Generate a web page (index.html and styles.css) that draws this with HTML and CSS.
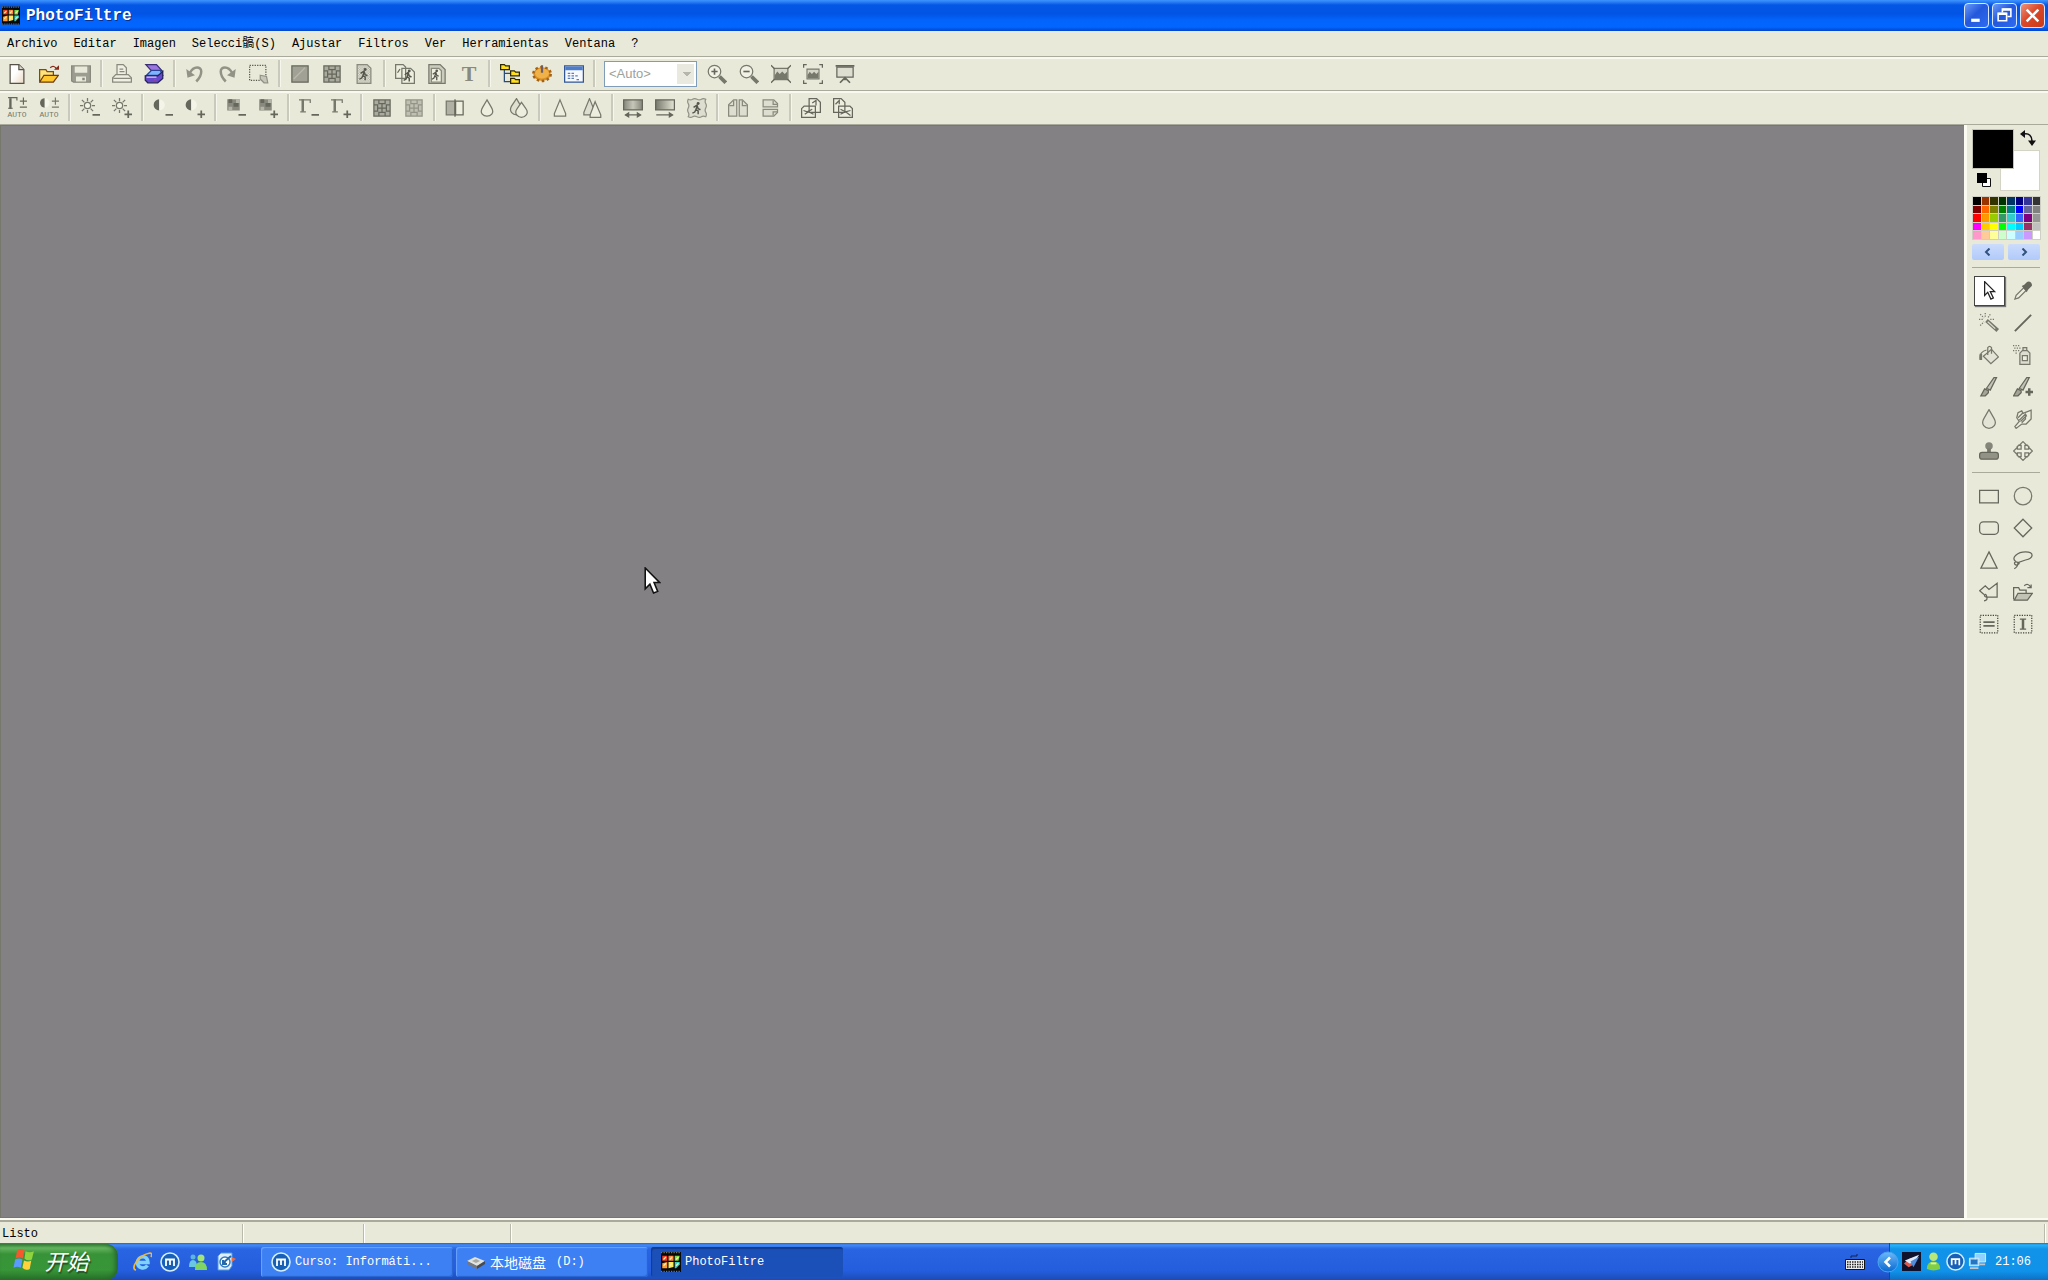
FILE: index.html
```html
<!DOCTYPE html>
<html lang="es">
<head>
<meta charset="utf-8">
<title>PhotoFiltre</title>
<link rel="stylesheet" href="styles.css">
</head>
<body>
<svg class="defs" aria-hidden="true">
  <defs>
    <linearGradient id="fade"><stop offset="0" stop-color="#77786c"/><stop offset="1" stop-color="#e4e5d4"/></linearGradient>
    <linearGradient id="band"><stop offset="0" stop-color="#85867a"/><stop offset=".5" stop-color="#c6c7b8"/><stop offset="1" stop-color="#85867a"/></linearGradient>
    <linearGradient id="paper" x2="1" y2="1"><stop offset=".4" stop-color="#fff"/><stop offset="1" stop-color="#ead9c4"/></linearGradient>
    <linearGradient id="ball" x2="0" y2="1"><stop offset="0" stop-color="#6cb8fa"/><stop offset="1" stop-color="#0868cf"/></linearGradient>
    <pattern id="dots" width="2" height="2" patternUnits="userSpaceOnUse"><path d="M0 0h2v2H0z" fill="#e6e6d8"/><path d="M0 0h1v1H0zM1 1h1v1H1z" fill="#b0b1a4"/></pattern>
  </defs>
  <symbol id="logo" viewBox="0 0 16 16"><path fill="#080808" d="M0 0h16v16H0z"/><path stroke="#776" stroke-dasharray="1 1" d="M0 .5h16M0 15.5h16"/><path fill="#f33b20" d="M1 3h4v4H1z"/><path fill="#ff8540" d="M6 3h4v4H6z"/><path fill="#79db46" d="M11 3h4l-1 4h-3z"/><path fill="#ff9c36" d="M1 9l4-1v5H1z"/><path fill="#f8e65a" d="M6 8h4v4l-4 1z"/><path fill="#36cfc5" d="M11 8h4v2l-3 3h-1z"/><path stroke="#ffe89e" d="M2 6l2-2M7 6l2-2M12 6l2-2M2 11l2-2M7 11l2-2M12 11l2-2"/></symbol>
  <symbol id="globe" viewBox="0 0 20 20"><circle cx="10" cy="10" r="9" fill="#1760b8" stroke="#d4efff" stroke-width="1.6"/><path fill="none" stroke="#fff" stroke-width="1.8" d="M6 14V7.500h8V14M10 7.500V13"/></symbol>
  <symbol id="runner" viewBox="0 0 10 12"><circle cx="6" cy="1.6" r="1.3" fill="#55564c"/><path fill="none" stroke="#55564c" stroke-width="1.3" d="M2 5l3-2 1 3 2 1M5 4L4 7l2 1v3M4 7l-1 2-2 1"/></symbol>
  <symbol id="gridpic" viewBox="0 0 16 16"><path fill="#66675c" d="M1 1h14v14H1z"/><path fill="#aaab9e" d="M2 2h3v3H2zM6 2h4v2H6zM11 2h3v3h-3zM2 6h2v4H2zM5 5h6v6H5zM12 6h2v4h-2zM2 11h3v3H2zM6 12h4v2H6zM11 11h3v3h-3z"/><path stroke="#66675c" d="M8 4v8M4 8h8"/></symbol>
  <symbol id="sun" viewBox="0 0 16 16"><circle cx="6" cy="6" r="2.5" fill="#f4f4e6" stroke="#77786c"/><path stroke="#77786c" d="M6 0v2.5M6 9.500v2.500M0 6h2.500M9.500 6H12M1.500 1.500l2 2M8.500 8.500l2 2M10.500 1.500l-2 2M3.500 8.500l-2 2"/></symbol>
  <symbol id="half" viewBox="0 0 16 16"><path fill="#66675c" d="M5 1a4.500 4.500 0 0 0 0 9z"/><path fill="#f4f4e8" d="M5 1a4.500 4.500 0 0 1 0 9z"/></symbol>
  <symbol id="gamma" viewBox="0 0 16 16"><path fill="none" stroke="#77786c" stroke-width="2" d="M3 1v10"/><path fill="none" stroke="#77786c" d="M0 1.500h9V4M1 11h4.500"/></symbol>
  <symbol id="squares" viewBox="0 0 16 16"><path fill="#89897e" d="M1 1h10v9H1z"/><path fill="#66675c" d="M2 1h3v3H2zM6 4h4v3H6z"/><path fill="#b4b5a8" d="M2 7h3v3H2zM8 1h3v3H8z"/></symbol>
  <symbol id="minus" viewBox="0 0 16 16"><path stroke="#66675c" stroke-width="1.400" d="M10 13.500h6"/></symbol>
  <symbol id="plus" viewBox="0 0 16 16"><path stroke="#66675c" stroke-width="1.400" d="M10 13h6M13 10v6"/></symbol>
  <symbol id="handle" viewBox="0 0 16 16"><path fill="#d6d6c8" stroke="#77786c" d="M2.500 3.500h11v9h-11z"/><path fill="#77786c" d="M3 12V9l2-3 2 2 2-2 2 2 2-2v6z"/></symbol>
</svg>

<header class="titlebar">
  <svg class="logo"><use href="#logo"/></svg>
  <h1 class="title">PhotoFiltre</h1>
  <button class="win" aria-label="Minimizar"><svg viewBox="0 0 16 16"><path fill="#fff" d="M3 11h8v3H3z"/></svg></button>
  <button class="win" aria-label="Restaurar"><svg viewBox="0 0 16 16"><path fill="none" stroke="#fff" stroke-width="1.500" d="M6 5V2h8v7h-3M2 6h8v7H2z"/><path stroke="#fff" stroke-width="2" d="M2 6.500h8M6 2.500h8"/></svg></button>
  <button class="win close" aria-label="Cerrar"><svg viewBox="0 0 16 16"><path stroke="#fff" stroke-width="2.400" d="M2.500 2.500l11 11M13.500 2.500l-11 11"/></svg></button>
</header>

<nav class="menubar">
  <button>Archivo</button><button>Editar</button><button>Imagen</button><button>Selecci髇(S)</button><button>Ajustar</button><button>Filtros</button><button>Ver</button><button>Herramientas</button><button>Ventana</button><button>?</button>
</nav>

<div class="toolbar" role="toolbar" aria-label="Principal">
  <button aria-label="Nuevo"><svg viewBox="0 0 16 16"><path fill="url(#paper)" stroke="#555149" d="M2.500.5h7l4 4v11h-11z"/><path fill="#ddd8cc" stroke="#555149" d="M9.500.5v4h4"/></svg></button>
  <button aria-label="Abrir"><svg viewBox="0 0 16 16"><path fill="#ffe27b" stroke="#7a4b12" d="M.5 14V4.500h5l1 1.500h5V9"/><path fill="#ffc62e" stroke="#6b3c10" d="M.5 14.500L4 9h11.500l-4 5.500z"/><path fill="none" stroke="#872918" d="M9 3c2-2 4-1 5 1"/><path fill="#872918" d="M12 4.500h4V1z"/></svg></button>
  <button aria-label="Guardar"><svg viewBox="0 0 16 16"><path fill="#9c9d91" stroke="#89897e" d="M.5 1.500h15v13H2l-1.500-1z"/><path fill="#e9e9da" d="M3 2h10v5H3zM4 10h8v4H4z"/><path fill="#89897e" d="M9 11h2v2H9z"/></svg></button>
  <i class="sep"></i>
  <button aria-label="Imprimir"><svg viewBox="0 0 16 16"><path fill="#efefe3" stroke="#89897e" d="M4 9V.5h5L11.500 3v6M.5 14.500V11L3 8.500h10l2.500 2.500v3.500z"/><path stroke="#89897e" d="M6 4h3M6 6h4M1 11.500h14"/></svg></button>
  <button aria-label="Escanear"><svg viewBox="0 0 16 16"><path fill="#9b76df" stroke="#392d75" d="M1.500.5H10l4.500 5H6z"/><path fill="#7cb5ff" stroke="#2c4494" d="M2 9l4-4h7l2 4z"/><path fill="#6648cd" stroke="#252458" d="M1 9.500h10l4-3.500v5.500L11 15H3l-2-2z"/><path stroke="#d8ceff" d="M2 10.500h8"/><path fill="#e93430" d="M8 12h2v1H8z"/></svg></button>
  <i class="sep"></i>
  <button aria-label="Deshacer"><svg viewBox="0 0 16 16"><path fill="none" stroke="#929386" stroke-width="2" d="M4 7c3-6 9-5 9-1 0 3-1 5-4 8"/><path fill="#929386" d="M1 4l1 7 6-2z"/></svg></button>
  <button aria-label="Rehacer"><svg viewBox="0 0 16 16"><path fill="none" stroke="#929386" stroke-width="2" d="M12 7C9 1 3 2 3 6c0 3 1 5 4 8"/><path fill="#929386" d="M15 4l-1 7-6-2z"/></svg></button>
  <button aria-label="Selección"><svg viewBox="0 0 16 16"><path fill="none" stroke="#55564c" stroke-dasharray="1 1" d="M.5 1h13v12H.5z"/><path fill="#c6c7ba" stroke="#929386" d="M9 9l5 1 1 5h-3l-3-3z"/></svg></button>
  <i class="sep"></i>
  <button aria-label="RGB"><svg viewBox="0 0 16 16"><path fill="#a1a295" stroke="#66675c" d="M1.500 1.500h13v13h-13z"/><path stroke="#b8b9ac" d="M3 12l9-9"/></svg></button>
  <button aria-label="Indexado"><svg><use href="#gridpic"/></svg></button>
  <button aria-label="Transparencia"><svg viewBox="0 0 16 16"><path fill="url(#dots)" stroke="#89897e" d="M2.500.5h8l3 3v12h-11z"/><use href="#runner" x="3" y="3" width="10" height="11"/></svg></button>
  <i class="sep"></i>
  <button aria-label="Duplicar"><svg viewBox="0 0 16 16"><path fill="#eeeede" stroke="#77786c" d="M.5.5h6l2 2v9h-8zM5.500 3.500h7l3 3v9h-10z"/><use href="#runner" x="6" y="4" width="9" height="11"/><path stroke="#66675c" d="M2 7l2-3"/></svg></button>
  <button aria-label="Tamaño"><svg viewBox="0 0 16 16"><path fill="#ccccbd" stroke="#77786c" d="M1.500.5h9l4 4v11h-13z"/><path fill="#eeeede" stroke="#89897e" d="M3.500 3.500h6l2 2v9h-8z"/><use href="#runner" x="3" y="4" width="8" height="10"/></svg></button>
  <button class="letter" aria-label="Texto">T</button>
  <i class="sep"></i>
  <button aria-label="Explorador"><svg viewBox="0 0 16 16"><path fill="none" stroke="#294d75" d="M3.500 4v10H10M3.500 7.500H9"/><path fill="#ffdf20" stroke="#2c2805" d="M.5.500h3l1 1h3v3h-7zM8.500 5.500h3l1 1h3v3h-7zM8.500 11.500h3l1 1h3v3h-7z"/></svg></button>
  <button aria-label="Automatizar"><svg viewBox="0 0 16 16"><ellipse cx="8" cy="8" rx="7" ry="5.500" fill="#d99127" stroke="#a66214" stroke-width="2" stroke-dasharray="2 2"/><ellipse cx="8" cy="7.500" rx="5.500" ry="4" fill="#f0b248"/><path stroke="#6d5f68" stroke-width="1.800" d="M8 1v6"/></svg></button>
  <button aria-label="Preferencias"><svg viewBox="0 0 16 16"><path fill="#f6f9ff" stroke="#315597" d="M.5 1.500h15v13H.5z"/><path fill="#4d7dc8" d="M1 2h14v3H1z"/><path stroke="#5f7eb0" stroke-dasharray="2 1" d="M3 7.500h5M3 9.500h9M3 11.500h5M10 12.500h3"/></svg></button>
  <i class="sep"></i>
  <select class="zoom" aria-label="Zoom" disabled><option>&lt;Auto&gt;</option></select>
  <button aria-label="Acercar"><svg viewBox="0 0 16 16"><circle cx="6" cy="6" r="5" fill="#f1f1e5" stroke="#77786c"/><path stroke="#66675c" stroke-width="1.300" d="M3.500 6h5M6 3.500v5"/><path stroke="#77786c" stroke-width="3" d="M10 10l5 5"/></svg></button>
  <button aria-label="Alejar"><svg viewBox="0 0 16 16"><circle cx="6" cy="6" r="5" fill="#f1f1e5" stroke="#77786c"/><path stroke="#66675c" stroke-width="1.300" d="M3.500 6h5"/><path stroke="#77786c" stroke-width="3" d="M10 10l5 5"/></svg></button>
  <button aria-label="Ajustar imagen"><svg viewBox="0 0 16 16"><use href="#handle"/><path fill="none" stroke="#66675c" d="M0 1l3 3M16 1l-3 3M0 15l3-3M16 15l-3-3"/></svg></button>
  <button aria-label="Ajustar ventana"><svg viewBox="0 0 16 16"><use href="#handle" x="1" y="1" width="14" height="14"/><path fill="none" stroke="#66675c" d="M.5 3V.5H3M13 .5h2.500V3M.5 13v2.500H3M13 15.500h2.500V13"/></svg></button>
  <button aria-label="Pantalla completa"><svg viewBox="0 0 16 16"><path fill="#deded0" stroke="#66675c" d="M1.500 2.500h13v8h-13z"/><path fill="none" stroke="#66675c" stroke-width="1.400" d="M.5 1.500h15M8 11v2M4 15l4-4 4 4"/></svg></button>
</div>

<div class="toolbar" role="toolbar" aria-label="Ajustes">
  <button class="auto"><svg viewBox="0 0 16 11"><path stroke="#66675c" stroke-width="2" d="M2 1v9"/><path fill="none" stroke="#66675c" d="M0 .5h7.500V3M0 9.500h4M10 3.500h6M13 .5v6M10 8.500h6"/></svg>AUTO</button>
  <button class="auto"><svg viewBox="0 0 16 11"><path fill="#66675c" d="M4 1a4 4 0 0 0 0 8z"/><path fill="#f4f4e8" d="M4 1a4 4 0 0 1 0 8z"/><path stroke="#77786c" d="M10 3.500h6M13 .5v6M10 8.500h6"/></svg>AUTO</button>
  <i class="sep"></i>
  <button aria-label="Menos brillo"><svg><use href="#sun"/><use href="#minus"/></svg></button>
  <button aria-label="Más brillo"><svg><use href="#sun"/><use href="#plus"/></svg></button>
  <i class="sep"></i>
  <button aria-label="Menos contraste"><svg><use href="#half"/><use href="#minus"/></svg></button>
  <button aria-label="Más contraste"><svg><use href="#half"/><use href="#plus"/></svg></button>
  <i class="sep"></i>
  <button aria-label="Menos saturación"><svg><use href="#squares"/><use href="#minus"/></svg></button>
  <button aria-label="Más saturación"><svg><use href="#squares"/><use href="#plus"/></svg></button>
  <i class="sep"></i>
  <button aria-label="Menos gamma"><svg><use href="#gamma"/><use href="#minus"/></svg></button>
  <button aria-label="Más gamma"><svg><use href="#gamma"/><use href="#plus"/></svg></button>
  <i class="sep"></i>
  <button aria-label="Escala de grises"><svg><use href="#gridpic"/></svg></button>
  <button aria-label="Grises suaves"><svg class="soft"><use href="#gridpic"/></svg></button>
  <i class="sep"></i>
  <button aria-label="Antipolvo"><svg viewBox="0 0 16 16"><path fill="#b0b1a4" stroke="#77786c" d="M1 2.500h7v11H1z"/><path fill="#eeeede" stroke="#66675c" d="M8.500 2.500h6v11h-6zM8 1v14"/></svg></button>
  <button aria-label="Suavizar"><svg viewBox="0 0 16 16"><path fill="#eeeede" stroke="#77786c" d="M8 1.500l3.500 6c3 5-1 7-3.500 7s-6.500-2-3.500-7z"/></svg></button>
  <button aria-label="Desenfocar"><svg viewBox="0 0 16 16"><path fill="#e0e0d0" stroke="#77786c" d="M6 .5l3.500 6c3 4-1 7-3.500 7S-.5 11 2 6.500z"/><path fill="#eeeede" stroke="#77786c" d="M10 3.500l3.500 5c3 4-1 7-3.500 7s-6.500-3-3.500-7z"/></svg></button>
  <i class="sep"></i>
  <button aria-label="Enfocar"><svg viewBox="0 0 16 16"><path fill="#eeeede" stroke="#77786c" d="M8 1.500l4.500 11v2h-9v-2z"/></svg></button>
  <button aria-label="Más nitidez"><svg viewBox="0 0 16 16"><path fill="#deded0" stroke="#77786c" d="M6 .5l4.500 11v2h-9v-2z"/><path fill="#eeeede" stroke="#77786c" d="M10.500 3l4.500 10.500v2H6.500v-2z"/></svg></button>
  <i class="sep"></i>
  <button aria-label="Degradado doble"><svg viewBox="0 0 16 16"><path fill="url(#band)" stroke="#66675c" d="M.5 1.500h15v8H.5z"/><path stroke="#66675c" d="M2 13.500h12"/><path fill="#66675c" d="M1 13.500l4-2.500v5zM15 13.500L11 11v5z"/></svg></button>
  <button aria-label="Degradado"><svg viewBox="0 0 16 16"><path fill="url(#fade)" stroke="#66675c" d="M.5 1.500h15v8H.5z"/><path stroke="#66675c" d="M1 13.500h13"/><path fill="#66675c" d="M15 13.500L11 11v5z"/></svg></button>
  <button aria-label="PhotoMasque"><svg viewBox="0 0 16 16"><path fill="#deded0" stroke="#929386" d="M1 1q2 1 3.500 0T8 1t3.500 0T15 1q-1 2 0 3.500T15 8t0 3.500 0 3.500q-2-1-3.500 0T8 15t-3.500 0T1 15q1-2 0-3.500T1 8t0-3.500T1 1z"/><use href="#runner" x="3" y="3" width="10" height="11"/></svg></button>
  <i class="sep"></i>
  <button aria-label="Simetría horizontal"><svg viewBox="0 0 16 16"><path fill="#deded0" stroke="#89897e" d="M4.500 1.500H7v13H.5v-9zM11.500 1.500H9v13h6.500v-9z"/><path fill="none" stroke="#89897e" d="M4.500 2v4H1M11.500 2v4H15"/></svg></button>
  <button aria-label="Simetría vertical"><svg viewBox="0 0 16 16"><path fill="#deded0" stroke="#89897e" d="M2.500 7V1.500H11l3 3V7zM2.500 9v5.500H11l3-3V9z"/><path fill="none" stroke="#89897e" d="M10.500 2v3H14M10.500 14v-3H14"/></svg></button>
  <i class="sep"></i>
  <button aria-label="Girar izquierda"><svg viewBox="0 0 16 16"><path fill="#eeeede" stroke="#66675c" d="M6.500.5h6l3 3v8h-9zM.5 8.500l2-2h9v9H.5z"/><path fill="none" stroke="#66675c" d="M2 10l3 1 4-2M3 13l3-2 4 2M9 4l3-2v4"/></svg></button>
  <button aria-label="Girar derecha"><svg viewBox="0 0 16 16"><path fill="#eeeede" stroke="#66675c" d="M.5.500h6l3 3v8h-9zM4.500 6.500h9l2 2v7h-11z"/><path fill="none" stroke="#66675c" d="M6 9l4 2 4-1M6 13l4-2 4 3M2 5l3-3v3"/></svg></button>
</div>

<div class="work">
  <main class="canvas" aria-label="Área de trabajo"></main>
  <aside class="panel">
    <div class="colors">
      <button class="back" aria-label="Color de fondo"></button>
      <button class="front" aria-label="Color de primer plano"></button>
      <button class="swap" aria-label="Intercambiar colores"><svg viewBox="0 0 16 16"><path fill="none" stroke="#111" stroke-width="1.600" d="M4 4c5-1 8 2 8 7"/><path fill="#111" d="M0 4l5-4v8zM8 10.500h8L12 16z"/></svg></button>
      <button class="reset" aria-label="Colores predeterminados"><svg viewBox="0 0 14 14"><path fill="#fff" stroke="#111" d="M5.500 5.500h8v8h-8z"/><path fill="#000" d="M0 0h10v10H0z"/></svg></button>
    </div>
    <div class="palette"></div>
    <div class="pager">
      <button aria-label="Anterior"><svg viewBox="0 0 8 8"><path fill="none" stroke="#31517e" stroke-width="2" d="M5.500.5L2 4l3.500 3.500"/></svg></button>
      <button aria-label="Siguiente"><svg viewBox="0 0 8 8"><path fill="none" stroke="#31517e" stroke-width="2" d="M2.500.5L6 4 2.500 7.500"/></svg></button>
    </div>
    <div class="tools">
      <button class="active" aria-label="Selección"><svg viewBox="0 0 16 16"><path fill="#fff" stroke="#222" d="M4.500.5v11L7 9l2.500 5.500 2-1L9 8.500h3.500z"/></svg></button>
      <button aria-label="Pipeta"><svg viewBox="0 0 16 16"><path fill="#eeeede" stroke="#77786c" d="M1.500 14.500l1-3 6-6 2 2-6 6z"/><path fill="#66675c" d="M7 4l2-1 2-2c2-2 5 1 4 3l-3 3-1 2z"/></svg></button>
      <button aria-label="Varita mágica"><svg viewBox="0 0 16 16"><path stroke="#77786c" stroke-width="3" d="M6 6l9 8"/><path stroke="#deded0" d="M7 7l6 5.500"/><path stroke="#77786c" stroke-dasharray="1 1" d="M5 0v4M0 5h4M1 1l3 3M9 1L7 4M1 10l3-3M9 5h3"/></svg></button>
      <button aria-label="Línea"><svg viewBox="0 0 16 16"><path stroke="#66675c" stroke-width="1.600" d="M1.500 14.500l13-13"/></svg></button>
      <button aria-label="Relleno"><svg viewBox="0 0 16 16"><path fill="#e4e4d6" stroke="#77786c" d="M3.500 9L10 3.500l5.500 6-6 5.500z"/><path fill="none" stroke="#77786c" d="M7 8V2q1.500-2 3 0v5M1 12c-1-5 1-7 5-8"/><path stroke="#77786c" stroke-width="2" d="M1.500 7v5"/></svg></button>
      <button aria-label="Aerógrafo"><svg viewBox="0 0 16 16"><path fill="#deded0" stroke="#77786c" d="M5.500 6.500l2-2h4l2 2v9h-8zM8 4V2h3v2"/><path fill="#eeeede" stroke="#77786c" d="M7.500 8.500h4v4h-4z"/><path stroke="#77786c" stroke-dasharray="1 1" d="M0 .5h6M1 2.500h5M0 4.500h5M2 6.500h2"/></svg></button>
      <button aria-label="Pincel"><svg viewBox="0 0 16 16"><path fill="#c3c4b5" stroke="#66675c" d="M6 9l6-8.500h2L9 10.500z"/><path fill="#a4a597" stroke="#66675c" d="M1.500 15l3-5.500 3 1.500v1.500L5 15z"/></svg></button>
      <button aria-label="Pincel avanzado"><svg viewBox="0 0 16 16"><path fill="#c3c4b5" stroke="#66675c" d="M5 9L11 .5h2L8 10.500z"/><path fill="#a4a597" stroke="#66675c" d="M.5 15l3-5.500 3 1.500v1.500L4 15z"/><path stroke="#66675c" stroke-width="2" d="M10 12h6M13 9v6"/></svg></button>
      <button aria-label="Desenfoque"><svg viewBox="0 0 16 16"><path fill="#e4e4d6" stroke="#77786c" d="M8 .5l4 7c3 5-1 8-4 8s-7-3-4-8z"/></svg></button>
      <button aria-label="Dedo"><svg viewBox="0 0 16 16"><path fill="#eeeede" stroke="#77786c" d="M14.500 1v7l-4 4H7l-4.500 3.500-1-1.500L5 10 3 7l1-4 3-1.500 1 2z"/><path fill="none" stroke="#77786c" d="M4 7l4-4M5 9l5-5 1 2M6 10l4-4v2l-3 3"/></svg></button>
      <button aria-label="Tampón"><svg viewBox="0 0 16 16"><circle cx="8" cy="4" r="3" fill="#85867a"/><path stroke="#77786c" stroke-width="3" d="M8 6v4"/><rect x=".5" y="9" width="15" height="5.500" rx="2" fill="#929386" stroke="#66675c"/></svg></button>
      <button aria-label="Mover"><svg viewBox="0 0 16 16"><path fill="#eeeede" stroke="#77786c" d="M8 .5l3 3H9.500v3h3V5l3 3-3 3V9.500h-3v3H11l-3 3-3-3h1.500v-3h-3V11l-3-3 3-3v1.500h3v-3H5z"/><path stroke="#77786c" d="M3 5l2-2M11 3l2 2M3 11l2 2M13 11l-2 2"/></svg></button>
    </div>
    <div class="tools">
      <button aria-label="Rectángulo"><svg viewBox="0 0 16 16"><path fill="none" stroke="#66675c" d="M.5 3.500h15v10H.5z"/></svg></button>
      <button aria-label="Elipse"><svg viewBox="0 0 16 16"><circle cx="8" cy="8" r="7" fill="none" stroke="#77786c"/></svg></button>
      <button aria-label="Rectángulo redondeado"><svg viewBox="0 0 16 16"><rect x=".5" y="3" width="15" height="10" rx="3" fill="none" stroke="#66675c"/></svg></button>
      <button aria-label="Rombo"><svg viewBox="0 0 16 16"><path fill="none" stroke="#66675c" d="M8 1l7 7-7 7-7-7z"/></svg></button>
      <button aria-label="Triángulo"><svg viewBox="0 0 16 16"><path fill="none" stroke="#66675c" d="M8 1.500l6.500 13h-13z"/></svg></button>
      <button aria-label="Lazo"><svg viewBox="0 0 16 16"><path fill="none" stroke="#66675c" d="M2 9C-2 6 4 1.500 10 1.500c7 0 7 5 0 6.500L4 10c-3-2-4 2-1 2 3-1 2-2 1-2 0 2-1 4-3 5"/></svg></button>
      <button aria-label="Polígono"><svg viewBox="0 0 16 16"><path fill="none" stroke="#66675c" d="M4 10L.5 7 5 3l3 3 6.500-5v11H6c-3 0-1-4 0-1s0 4-2 4"/></svg></button>
      <button aria-label="Cargar selección"><svg viewBox="0 0 16 16"><path fill="none" stroke="#66675c" d="M.5 14V4.500h4l1 2h5V9M9 3c2-2 4-1 5 1M11.500 4.500h3V2"/><path fill="#c2c3b4" stroke="#66675c" d="M1 14.500L4 9h11.500l-4 5.500z"/></svg></button>
      <button aria-label="Selección horizontal"><svg viewBox="0 0 16 16"><path fill="none" stroke="#44453c" stroke-dasharray="1 1" d="M1 1h14v14H1z"/><path stroke="#66675c" stroke-width="1.500" d="M3.500 6.500h9M3.500 9.500h9"/></svg></button>
      <button aria-label="Selección vertical"><svg viewBox="0 0 16 16"><path fill="none" stroke="#44453c" stroke-dasharray="1 1" d="M1 1h14v14H1z"/><path stroke="#66675c" stroke-width="2" d="M8 4v8"/><path stroke="#66675c" d="M5.500 4h5M5.500 12h5"/></svg></button>
    </div>
  </aside>
</div>

<footer class="status"><span>Listo</span><span></span><span></span><span></span></footer>

<div class="taskbar">
  <button class="start"><svg viewBox="0 0 22 22"><path fill="#f4582d" d="M4 2q4-2 7 0L9.500 10Q6 8 2.500 10z"/><path fill="#8fd33d" d="M12 3q4 2 8 0l-2 8q-4 2-7-1z"/><path fill="#5a9bff" d="M2 11q4-2 7 0l-1.500 8Q4 17 .5 19z"/><path fill="#ffd13b" d="M10.500 12q4 2 7 0l-1.500 8q-4 2-7-1z"/></svg>开始</button>
  <div class="quick">
    <button aria-label="Internet Explorer"><svg viewBox="0 0 20 20"><path fill="none" stroke="#7fd2ff" stroke-width="3.500" d="M5.500 10.500h10.500c0-8-10.500-7-10.500 0 0 6 7 7 10 3"/><path fill="none" stroke="#f3b736" stroke-width="1.700" d="M4 18C-2 17 6 3 18 1c2 0 2 2 1 4"/></svg></button>
    <button aria-label="Maxthon"><svg><use href="#globe"/></svg></button>
    <button aria-label="Messenger"><svg viewBox="0 0 20 20"><circle cx="5" cy="5" r="2.500" fill="#5cb5df"/><path fill="#6ac7e4" d="M1 15q0-7 4-7t4 7z"/><circle cx="13" cy="6" r="3.500" fill="#a0e47a"/><path fill="#7fd463" d="M7 18q0-8 6-8t6 8z"/></svg></button>
    <button aria-label="Mostrar escritorio"><svg viewBox="0 0 20 20"><path fill="#dcefff" stroke="#4d99df" d="M2 4l3-3h11v13l-3 4H2z"/><circle cx="9" cy="10" r="5" fill="#fff" stroke="#3679bb" stroke-width="1.500"/><path stroke="#226aaf" stroke-width="2" d="M7 11l8-7M7 8v4h4"/><path fill="#ee6a38" d="M16 5l4 2-4 3z"/></svg></button>
  </div>
  <button class="task"><svg><use href="#globe"/></svg>Curso: Informáti...</button>
  <button class="task"><svg viewBox="0 0 20 20"><path fill="#e2e2dd" d="M1 9l8-4 10 4-8 5z"/><path fill="#777" d="M1 9l10 5v3L1 12z"/><path fill="#4a4a4a" d="M11 14l8-5v3l-8 5z"/><path fill="#a9a9a5" d="M6 9l4-2 4 2-4 2z"/></svg><span class="disk">本地磁盘</span><span>(D:)</span></button>
  <button class="task current"><svg><use href="#logo"/></svg>PhotoFiltre</button>
  <button class="keyboard" aria-label="Teclado"><svg viewBox="0 0 20 20"><path fill="none" stroke="#18204a" d="M6 6V4h6V2"/><path fill="#eee" stroke="#111" d="M.5 7.500h19v10H.5z"/><path stroke="#222" stroke-width="1.500" stroke-dasharray="1.500 1" d="M2 10h16M2 12.500h16M2 15h16"/></svg></button>
  <div class="tray">
    <button class="chevron" aria-label="Mostrar iconos"><svg viewBox="0 0 22 22"><circle cx="11" cy="11" r="10" fill="url(#ball)" stroke="#4aa4ee"/><path fill="none" stroke="#fff" stroke-width="2.500" d="M13 6.500L8.500 11l4.500 4.500"/></svg></button>
    <svg viewBox="0 0 20 20"><path fill="#10122b" d="M0 0h20v20H0z"/><path fill="#db5a4d" d="M2 12l7-6 2 8-4 2z"/><path fill="#dcecff" d="M3 9l15-6-5 8-5 1z"/><path fill="#528bd7" d="M9 10l9-5-6 11z"/></svg>
    <svg viewBox="0 0 20 20"><circle cx="10" cy="5" r="4.500" fill="#b8e879"/><path fill="#80cf45" d="M3 18q0-8 7-8t7 8q-7 3-14 0z"/><path stroke="#d6f7a8" stroke-width="2" d="M7 12h6"/></svg>
    <svg><use href="#globe"/></svg>
    <svg viewBox="0 0 20 20"><path fill="#8fd1ff" stroke="#d9eaf5" d="M7.500 1.500h11v9h-11zM1.500 6.500h10v8h-10z"/><path stroke="#c0c6cc" stroke-width="2" d="M2 17h9M12 13h6"/><path fill="#2675c0" d="M3 8h7v5H3z"/></svg>
    <time>21:06</time>
  </div>
</div>

<svg class="pointer" viewBox="0 0 16 26" aria-hidden="true"><path fill="#fff" stroke="#111" stroke-width="1.500" d="M1 1v20l4.500-4.500L9 25l4-1.500L9.500 15H15z"/></svg>
<script src="palette.js"></script>
</body>
</html>
```
FILE: styles.css
```css
* { box-sizing: border-box; }
body {
  margin: 0;
  min-height: 100vh;
  display: flex;
  flex-direction: column;
  background: #e8e9d8;
  color: #000;
  font: 12px/16px "Liberation Mono", "Noto Sans CJK SC", monospace;
}
button {
  margin: 0;
  padding: 0;
  border: 0;
  background: none;
  color: inherit;
  font: inherit;
  display: flex;
  align-items: center;
  justify-content: center;
}
svg { display: block; flex: none; }
.defs { position: absolute; width: 0; height: 0; }

.titlebar {
  height: 31px;
  padding: 0 3px 0 2px;
  display: flex;
  align-items: center;
  gap: 3px;
  background: linear-gradient(#3d95ff 0, #2b7df5 2px, #0457e4 5px, #0254e4 14px, #0264fb 20px, #0266ff 27px, #0145cb 31px);
}
.logo { width: 18px; height: 19px; }
.title {
  flex: 1;
  margin: 0 0 0 3px;
  color: #fff;
  font-size: 16px;
  line-height: 20px;
  text-shadow: 1px 1px #0a2f8a;
}
.win {
  width: 25px;
  height: 25px;
  border: 1px solid #dce8ff;
  border-radius: 4px;
  background: linear-gradient(135deg, #6b9bf6, #2458dc 45%, #2e6cf2);
}
.win svg { width: 17px; height: 17px; }
.close { background: linear-gradient(135deg, #ef9579, #d9492a 45%, #c93a17); }

.menubar {
  height: 26px;
  padding: 0 7px;
  display: flex;
  align-items: center;
  gap: 16px;
  border-bottom: 1px solid #a9aa9c;
}
.toolbar {
  height: 34px;
  padding: 0 1px 2px;
  display: flex;
  align-items: center;
  border-top: 2px solid #f9f9ef;
  border-bottom: 1px solid #a9aa9c;
}
.toolbar button { width: 32px; height: 30px; }
.toolbar svg { width: 20px; height: 20px; }
.toolbar .soft { opacity: .65; }
.sep {
  width: 9px;
  height: 27px;
  display: flex;
  justify-content: center;
}
.sep::before { content: ""; width: 2px; background: #c9cabb; border-right: 1px solid #f6f6ec; }
.toolbar .letter { color: #89897e; font: bold 22px/24px "Liberation Serif", serif; }
.zoom {
  width: 93px;
  height: 26px;
  margin: 0 4px 0 5px;
  padding: 0 22px 0 4px;
  appearance: none;
  border: 1px solid #7f9db9;
  border-radius: 0;
  background:
    linear-gradient(45deg, transparent 50%, #b5b6ad 50%) right 9px center / 4px 4px no-repeat,
    linear-gradient(-45deg, transparent 50%, #b5b6ad 50%) right 5px center / 4px 4px no-repeat,
    linear-gradient(#e9e9df, #e9e9df) right 2px center / 17px 20px no-repeat,
    #fff;
  color: #a0a198;
  opacity: 1;
  font: 13px/20px "Liberation Sans", sans-serif;
}
.toolbar .auto {
  flex-direction: column;
  gap: 1px;
  color: #77786c;
  font-size: 8px;
  line-height: 7px;
}
.toolbar .auto svg { width: 19px; height: 13px; }

.work { flex: 1; display: flex; }
.canvas {
  flex: 1;
  border: 1px solid #77786c;
  border-right: 0;
  background: #838183;
}
.panel { width: 84px; padding: 4px 8px 0 5px; border-left: 3px solid #fbfbf2; }
.colors { position: relative; height: 67px; }
.colors button { position: absolute; }
.colors .front { left: 0; top: 0; width: 42px; height: 40px; background: #000; border: 1px solid #c4c4b6; }
.colors .back { right: 0; bottom: 5px; width: 40px; height: 41px; background: #fff; border: 1px solid #d4d4c6; }
.colors .swap { right: 4px; top: 1px; }
.colors .swap svg { width: 16px; height: 16px; }
.colors .reset { left: 5px; top: 44px; }
.colors .reset svg { width: 14px; height: 14px; }
.palette {
  width: 69px;
  height: 44px;
  padding: 1px;
  display: grid;
  grid-template-columns: repeat(8, 1fr);
  grid-template-rows: repeat(5, 1fr);
  gap: 1px;
  background: #cfcfc4;
}
.pager { display: flex; gap: 4px; padding: 4px 0 7px; border-bottom: 1px solid #a9aa9c; }
.pager button { flex: 1; height: 16px; border-radius: 2px; background: linear-gradient(#cbdcfc, #b1cafa); }
.pager svg { width: 8px; height: 8px; }
.tools { display: grid; grid-template-columns: 1fr 1fr; grid-auto-rows: 32px; padding: 7px 0 5px; }
.tools + .tools { border-top: 1px solid #a9aa9c; }
.tools button { width: 31px; height: 30px; margin: auto; }
.tools svg { width: 20px; height: 20px; }
.tools .active { border: 1px solid #444; background: #fff; box-shadow: 1px 1px 1px #777; }

.status {
  height: 25px;
  display: grid;
  grid-template-columns: 243px 121px 147px 1fr;
  border-top: 2px solid #fbfbf2;
  box-shadow: inset 0 2px #a9aa9c;
}
.status span { margin-top: 4px; padding: 2px; border-right: 1px solid #b9baab; box-shadow: 1px 0 #fff; }
.status span:last-child { margin-right: 3px; }

.taskbar {
  height: 37px;
  display: flex;
  align-items: center;
  color: #fff;
  background: linear-gradient(#2961c4 0, #438af4 2px, #2965e2 6px, #245ddd 28px, #1b4bb8 37px);
}
.start {
  width: 118px;
  height: 36px;
  padding: 0 16px 4px 0;
  gap: 8px;
  border-radius: 0 12px 12px 0;
  background: linear-gradient(#3c8b3c, #63b45f 4px, #389338 10px, #379637 26px, #27702a);
  box-shadow: inset -3px 0 4px #27682e;
  font: italic 22px/28px "Noto Sans CJK SC", sans-serif;
  text-shadow: 1px 2px 1px #244f25;
}
.start svg { width: 23px; height: 23px; }
.quick { display: flex; gap: 8px; padding: 0 25px 0 14px; }
.quick svg, .keyboard svg, .task svg { width: 20px; height: 20px; }
.task {
  width: 192px;
  height: 30px;
  margin-right: 3px;
  padding-left: 10px;
  justify-content: flex-start;
  gap: 4px;
  border-radius: 3px;
  background: #3c80f4;
  box-shadow: inset 1px 1px 1px #6aa3ff, inset -1px -1px 1px #2861ce;
}
.disk { padding-right: 6px; font: 14px/18px "Noto Sans CJK SC", sans-serif; }
.current { background: #1b50b8; box-shadow: inset 1px 2px 1px #123b91; }
.keyboard { margin-left: auto; margin-right: 24px; }
.tray {
  width: 159px;
  height: 37px;
  display: flex;
  align-items: center;
  gap: 3px;
  border-left: 1px solid #0b4ba8;
  background: linear-gradient(#1375c8 0, #27b2f6 2px, #1193e9 6px, #1092ea 28px, #0d6fc4 37px);
}
.tray svg { width: 19px; height: 19px; }
.tray .chevron { margin-left: -13px; }
.tray .chevron svg { width: 22px; height: 22px; }
.tray time { margin-left: 5px; }
.pointer { position: absolute; left: 644px; top: 567px; width: 17px; height: 27px; }
```
FILE: palette.js
```js
const rows = [
  "#000000 #993300 #333300 #003300 #003366 #000080 #333399 #333333",
  "#800000 #ff6600 #808000 #008000 #008080 #0000ff #666699 #808080",
  "#ff0000 #ff9900 #99cc00 #339966 #33cccc #3366ff #800080 #969696",
  "#ff00ff #ffcc00 #ffff00 #00ff00 #00ffff #00ccff #993366 #c0c0c0",
  "#ff99cc #ffcc99 #ffff99 #ccffcc #ccffff #99ccff #cc99ff #ffffff"
];
const palette = document.querySelector(".palette");
for (const color of rows.join(" ").split(" ")) {
  const swatch = document.createElement("button");
  swatch.style.background = color;
  swatch.setAttribute("aria-label", color);
  palette.append(swatch);
}
```
